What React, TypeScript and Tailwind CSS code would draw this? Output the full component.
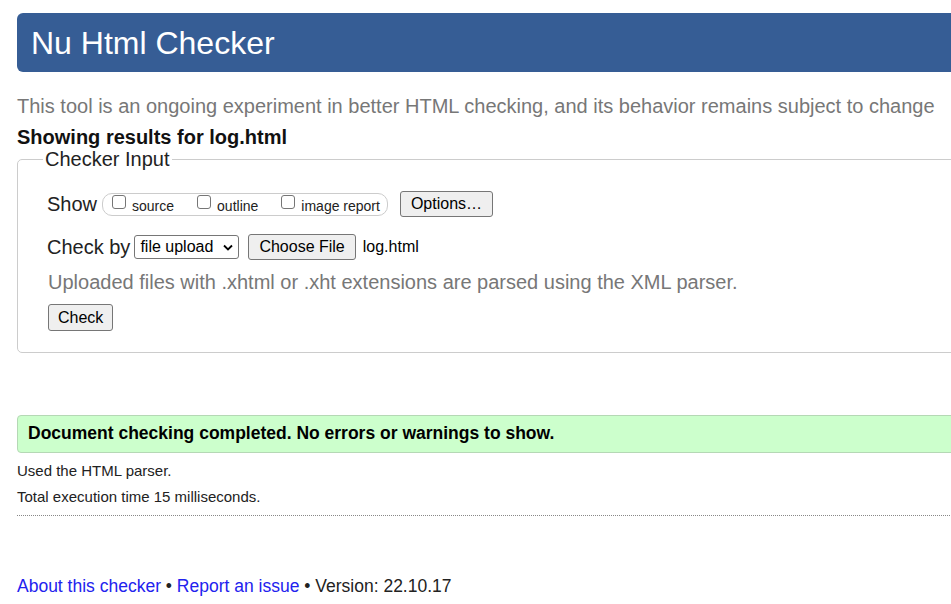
const btn =
  "inline-flex items-center rounded-[3px] border border-[#767676] bg-[#efefef] text-[16px] leading-none text-black";

function ShowOption({ label, first }: { label: string; first?: boolean }) {
  return (
    <label className={`flex items-start ${first ? "" : "ml-[23px]"}`}>
      <input
        type="checkbox"
        className="m-0 h-[14px] w-[14px] appearance-none rounded-[3px] border border-[#767676] bg-white"
      />
      <span className="ml-[6px] mt-[4px] text-[14px] leading-[14px] text-[#222]">{label}</span>
    </label>
  );
}

export default function App() {
  return (
    <div className="w-full overflow-hidden bg-white font-['Liberation_Sans',Arial,sans-serif] text-[#222]">
      <div className="w-[980px] pl-[17px] pt-[13px]">
        <header className="flex h-[59px] items-center rounded-[6px] bg-[#365d95] pl-[14px]">
          <h1 className="text-[32px] leading-none text-white">Nu Html Checker</h1>
        </header>

        <p className="mt-[22px] text-[20px] leading-[24px] text-[#777]">
          This tool is an ongoing experiment in better HTML checking, and its behavior remains subject to change
        </p>
        <p className="mt-[8px] text-[20px] font-bold leading-[22px] text-[#111]">Showing results for log.html</p>

        <fieldset className="rounded-[5px] border border-[#ccc] pb-[21px] pl-[30px]">
          <legend className="-ml-[5px] px-[2px] text-[20px] leading-[22px] text-[#222]">Checker Input</legend>

          <div className="mt-[20px] flex h-[28px] items-center">
            <span className="-ml-[1px] text-[20px] leading-none">Show</span>
            <div className="ml-[5px] flex h-[23px] items-start rounded-[10px] border border-[#ccc] pl-[9px] pr-[7px] pt-[1px]">
              <ShowOption label="source" first />
              <ShowOption label="outline" />
              <ShowOption label="image report" />
            </div>
            <button className={`${btn} ml-[12px] h-[26px] px-[10px]`}>Options…</button>
          </div>

          <div className="mt-[15px] flex h-[28px] items-center">
            <span className="-ml-[1px] text-[20px] leading-none">Check by</span>
            <div className="relative ml-[4px]">
              <select className="h-[24px] w-[105px] appearance-none rounded-[3px] border border-[#767676] bg-white pl-[5px] text-[16px] leading-none text-black">
                <option>file upload</option>
              </select>
              <svg
                className="pointer-events-none absolute right-[6px] top-[9px]"
                width="10"
                height="7"
                viewBox="0 0 10 7"
                fill="none"
              >
                <path d="M1 1.5 5 5.5 9 1.5" stroke="#000" strokeWidth="1.8" />
              </svg>
            </div>
            <button className={`${btn} ml-[9px] h-[26px] px-[10px]`}>Choose File</button>
            <span className="ml-[7px] text-[16px] leading-none text-black">log.html</span>
          </div>

          <p className="mt-[9px] text-[20px] leading-[24px] text-[#777]">
            Uploaded files with .xhtml or .xht extensions are parsed using the XML parser.
          </p>

          <button className={`${btn} mt-[10px] h-[27px] px-[9px]`}>Check</button>
        </fieldset>

        <div className="mt-[62px] flex h-[38px] items-center rounded-[4px] border border-[#b5d8b5] bg-[#ccffcc] pl-[10px]">
          <p className="text-[17.5px] font-bold leading-none text-black">
            Document checking completed. No errors or warnings to show.
          </p>
        </div>

        <p className="mt-[9px] text-[15px] leading-[18px] text-[#222]">Used the HTML parser.</p>
        <p className="mt-[8px] text-[15px] leading-[18px] text-[#222]">Total execution time 15 milliseconds.</p>
        <div className="mt-[9px] border-b border-dotted border-[#888]" />

        <footer className="mt-[59px] text-[17.5px] leading-[22px] text-[#222]">
          <a href="#" className="text-[#2222ee]">
            About this checker
          </a>{" "}
          •{" "}
          <a href="#" className="text-[#2222ee]">
            Report an issue
          </a>{" "}
          • Version: 22.10.17
        </footer>
      </div>
    </div>
  );
}
